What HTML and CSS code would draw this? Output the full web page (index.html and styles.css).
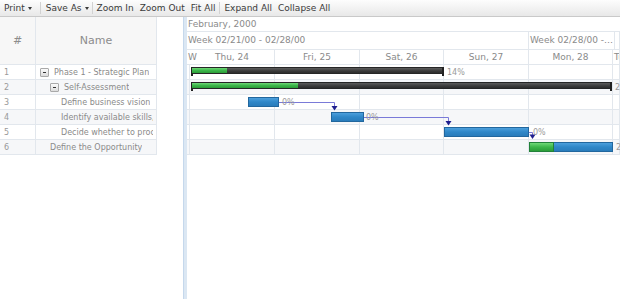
FILE: index.html
```html
<!DOCTYPE html>
<html>
<head>
<meta charset="utf-8">
<link rel="stylesheet" href="styles.css">
</head>
<body>
<div class="app">
  <div class="toolbar">
    <span class="btn btn-print">Print<span class="caret"></span></span>
    <span class="sep sep-a"></span>
    <span class="btn btn-save">Save As<span class="caret"></span></span>
    <span class="sep sep-b"></span>
    <span class="btn">Zoom In</span>
    <span class="btn">Zoom Out</span>
    <span class="btn">Fit All</span>
    <span class="sep"></span>
    <span class="btn">Expand All</span>
    <span class="btn">Collapse All</span>
  </div>
  <div class="main">
    <div class="grid">
      <div class="grid-head">
        <div class="hcell">#</div>
        <div class="hcell">Name</div>
      </div>
      <div class="grow">
        <div class="num">1</div>
        <div class="name l0"><span class="toggle"></span><span class="txt">Phase 1 - Strategic Plan</span></div>
      </div>
      <div class="grow alt">
        <div class="num">2</div>
        <div class="name l1"><span class="toggle"></span><span class="txt">Self-Assessment</span></div>
      </div>
      <div class="grow">
        <div class="num">3</div>
        <div class="name l2"><span class="txt">Define business vision</span></div>
      </div>
      <div class="grow alt">
        <div class="num">4</div>
        <div class="name l2"><span class="txt">Identify available skills, information and support</span></div>
      </div>
      <div class="grow">
        <div class="num">5</div>
        <div class="name l2"><span class="txt">Decide whether to proceed</span></div>
      </div>
      <div class="grow alt">
        <div class="num">6</div>
        <div class="name l1b"><span class="txt">Define the Opportunity</span></div>
      </div>
    </div>
    <div class="splitter"></div>
    <div class="gantt">
      <div class="tl-month">February, 2000</div>
      <div class="tl-week">
        <div class="wcell">Week 02/21/00 - 02/28/00</div>
        <div class="wcell ell">Week 02/28/00 - 03/06/00</div>
        <div class="wcell"></div>
      </div>
      <div class="tl-days days">
        <div class="dcell first">W</div>
        <div class="dcell">Thu, 24</div>
        <div class="dcell">Fri, 25</div>
        <div class="dcell">Sat, 26</div>
        <div class="dcell">Sun, 27</div>
        <div class="dcell">Mon, 28</div>
        <div class="dcell last">Tue, 29</div>
      </div>
      <div class="gbody">
        <div class="brow days"><i></i><i></i><i></i><i></i><i></i><i></i><i></i></div>
        <div class="brow days alt"><i></i><i></i><i></i><i></i><i></i><i></i><i></i></div>
        <div class="brow days"><i></i><i></i><i></i><i></i><i></i><i></i><i></i></div>
        <div class="brow days alt"><i></i><i></i><i></i><i></i><i></i><i></i><i></i></div>
        <div class="brow days"><i></i><i></i><i></i><i></i><i></i><i></i><i></i></div>
        <div class="brow days alt"><i></i><i></i><i></i><i></i><i></i><i></i><i></i></div>

        <svg class="links" width="433" height="90" viewBox="0 0 433 90">
          <polyline points="92,37.5 147.5,37.5 147.5,42" fill="none" stroke="#7a7ad8" stroke-width="1"/>
          <polygon points="144.5,41 150.5,41 147.5,45.5" fill="#1e1e8e"/>
          <polyline points="177,52.5 261.5,52.5 261.5,57" fill="none" stroke="#7a7ad8" stroke-width="1"/>
          <polygon points="258.5,56 264.5,56 261.5,60.5" fill="#1e1e8e"/>
          <polyline points="342,67.5 345.5,67.5 345.5,70" fill="none" stroke="#7a7ad8" stroke-width="1"/>
          <polygon points="342.5,69.5 348.5,69.5 345.5,74" fill="#1e1e8e"/>
        </svg>

        <div class="sbar" style="left:4px;top:2px;width:253px"><span class="prog" style="width:35px"></span></div>
        <span class="pct" style="left:260px;top:3px">14%</span>
        <div class="sbar" style="left:4px;top:17px;width:421px"><span class="prog" style="width:106px"></span></div>
        <span class="pct" style="left:428px;top:18px">25%</span>

        <div class="task" style="left:61px;top:32px;width:31px"></div>
        <span class="pct" style="left:95px;top:33px">0%</span>
        <div class="task" style="left:144px;top:47px;width:33px"></div>
        <span class="pct" style="left:179px;top:48px">0%</span>
        <div class="task" style="left:257px;top:62px;width:85px"></div>
        <span class="pct" style="left:346px;top:63px">0%</span>
        <div class="task" style="left:342px;top:77px;width:84px"><span class="prog" style="width:23px"></span></div>
        <span class="pct" style="left:429px;top:78px">27%</span>
      </div>
    </div>
  </div>
</div>
</body>
</html>
```
FILE: styles.css
```css
html, body {
  margin: 0;
  padding: 0;
  width: 620px;
  height: 299px;
  overflow: hidden;
  background: #fff;
  font-family: "DejaVu Sans", "Liberation Sans", sans-serif;
}
.app {
  display: flex;
  flex-direction: column;
  height: 299px;
}
.toolbar {
  height: 17px;
  box-sizing: border-box;
  display: flex;
  align-items: center;
  padding-left: 1px;
  background: linear-gradient(#fdfdfd, #e8e8e8);
  border-bottom: 1px solid #c9c9c9;
  font-size: 9px;
  color: #3a3a3a;
  white-space: nowrap;
}
.btn {
  padding: 0 3px;
  line-height: 16px;
  display: flex;
  align-items: center;
}
.caret {
  display: inline-block;
  width: 0;
  height: 0;
  border-left: 2.5px solid transparent;
  border-right: 2.5px solid transparent;
  border-top: 3px solid #3a3a3a;
  margin-left: 3px;
  margin-right: 2px;
}
.btn-print .caret { margin-right: 4px; }
.btn-save .caret { margin-right: 0; }
.sep {
  width: 1px;
  height: 12px;
  background: #d2d2d2;
  margin: 0 1px;
}
.sep-a { margin-right: 2px; }
.sep-b { margin-left: 0; }
.main {
  flex: 1;
  display: flex;
  min-height: 0;
}
.grid {
  width: 183px;
  flex: none;
  background: #fff;
}
.grid-head {
  display: grid;
  grid-template-columns: 36px 121px;
  height: 48px;
}
.hcell {
  display: flex;
  align-items: center;
  justify-content: center;
  background: #f7f7f7;
  border-right: 1px solid #e2e7ed;
  border-bottom: 1px solid #e2e7ed;
  color: #8c8c8c;
  font-size: 11px;
}
.grow {
  display: grid;
  grid-template-columns: 36px 121px;
  height: 15px;
  font-size: 8px;
  color: #8a8a8a;
}
.grow > div {
  box-sizing: border-box;
  border-right: 1px solid #e2e7ed;
  border-bottom: 1px solid #e2e7ed;
  display: flex;
  align-items: center;
  white-space: nowrap;
  overflow: hidden;
}
.grow.alt > div { background: #f6f7f9; }
.num {
  padding-left: 4px;
  color: #999;
}
.name { padding-right: 3px; }
.txt {
  overflow: hidden;
  min-width: 0;
}
.name.l0 { padding-left: 4px; }
.name.l1 { padding-left: 14px; }
.name.l2 { padding-left: 25px; }
.name.l1b { padding-left: 14px; }
.toggle {
  flex: none;
  width: 9px;
  height: 9px;
  box-sizing: border-box;
  border: 1px solid #a9a9a9;
  border-radius: 1px;
  background: linear-gradient(#fbfbfb, #dcdcdc);
  margin-right: 5px;
  position: relative;
}
.toggle::after {
  content: "";
  position: absolute;
  left: 2px;
  top: 3px;
  width: 3px;
  height: 1px;
  background: #333;
}
.splitter {
  width: 4px;
  flex: none;
  background: #dbe7f3;
  border-left: 1px solid #c5d8ec;
  box-sizing: border-box;
}
.gantt {
  flex: 1;
  min-width: 0;
  overflow: hidden;
  font-size: 9px;
  color: #8a8a8a;
  white-space: nowrap;
}
.tl-month {
  height: 15px;
  line-height: 14px;
  padding-left: 1px;
  box-sizing: border-box;
  border-bottom: 1px solid #e2e7ed;
}
.tl-week {
  display: grid;
  grid-template-columns: 342px 86px 1fr;
  height: 18px;
}
.wcell {
  box-sizing: border-box;
  border-right: 1px solid #e2e7ed;
  border-bottom: 1px solid #e2e7ed;
  padding-left: 1px;
  line-height: 17px;
  overflow: hidden;
}
.wcell.ell { text-overflow: ellipsis; padding-right: 0; }
.days {
  display: grid;
  grid-template-columns: 3px 85px 85px 84px 85px 84px 1fr;
}
.tl-days { height: 15px; }
.dcell {
  box-sizing: border-box;
  border-right: 1px solid #e2e7ed;
  border-bottom: 1px solid #e2e7ed;
  text-align: center;
  line-height: 14px;
  overflow: hidden;
}
.dcell.first {
  overflow: visible;
  text-align: left;
  padding-left: 1px;
  border-right: none;
}
.dcell.last { text-align: left; padding-left: 1px; }
.gbody {
  position: relative;
}
.brow { height: 15px; }
.brow > i {
  box-sizing: border-box;
  border-right: 1px solid #e2e7ed;
  border-bottom: 1px solid #e2e7ed;
}
.brow.alt > i { background: #f6f7f9; }
.links {
  position: absolute;
  left: 0;
  top: 0;
}
.sbar {
  position: absolute;
  height: 7px;
  box-sizing: border-box;
  background: linear-gradient(#5c5c5c, #3a3a3a 60%, #2c2c2c);
  border: 1px solid #262626;
}
.sbar::before, .sbar::after {
  content: "";
  position: absolute;
  top: -1px;
  width: 2px;
  height: 9px;
  background: #222;
}
.sbar::before { left: -1px; }
.sbar::after { right: -1px; }
.sbar .prog, .task .prog {
  position: absolute;
  left: 0;
  top: 0;
  bottom: 0;
  background: linear-gradient(#6fd877, #3cb64a 50%, #2b9c38);
}
.task {
  position: absolute;
  height: 10px;
  box-sizing: border-box;
  background: linear-gradient(#4c9fdc, #2f87c8 50%, #2a7cbb);
  border: 1px solid #22679e;
}
.task .prog {
  top: -1px;
  bottom: -1px;
  left: -1px;
  border: 1px solid #22813a;
}
.pct {
  position: absolute;
  font-size: 8px;
  color: #9a9a9a;
  line-height: 9px;
}
```
